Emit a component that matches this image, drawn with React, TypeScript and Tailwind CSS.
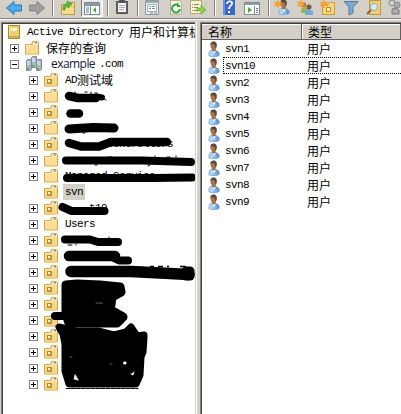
import React from 'react';

function Mixed({ text }: { text: string }) {
  const parts = text.match(/[\x00-\x7f]+|[^\x00-\x7f]+/g) || [];
  return (
    <span className="flex items-center whitespace-pre">
      {parts.map((p, i) =>
        p.charCodeAt(0) < 128 ? (
          <span key={i} className="pt-px text-[11px] leading-[15px] tracking-[-0.6px] font-['Liberation_Mono',monospace]">{p}</span>
        ) : (
          <span key={i} className="text-[12px] leading-4 font-['Noto_Sans_CJK_SC',sans-serif]">{p}</span>
        ),
      )}
    </span>
  );
}

function Folder({ unit }: { unit?: boolean }) {
  return (
    <svg className="h-4 w-[14px] shrink-0" viewBox="0 0 14 16">
      <path d="M.5 4.500h6l1-3h5l1 1v11.500H.5z" fill="#f3cf78" stroke="#d3a650" />
      <path d="M8 2.500h5v1H8z" fill="#fff" />
      <path d="M10 2h2v1.500h-2z" fill="#549ee0" />
      <path d="M1 6h7l1-1h4v8.500H1z" fill={unit ? '#f8d784' : '#fbdd93'} />
      <path d="M1 5.500h6l1-1h5" fill="none" stroke="#fff0bd" />
      {unit && (
        <>
          <path d="M3.500 7.500h4v4h-4z" fill="#c7a850" stroke="#a5873c" />
          <path d="M4 8h2v2H4z" fill="#fff0b2" />
        </>
      )}
    </svg>
  );
}

function Expander({ open }: { open?: boolean }) {
  return (
    <svg className="h-[9px] w-[9px] shrink-0" viewBox="0 0 9 9" shapeRendering="crispEdges">
      <path d="M.5.5h8v8h-8z" fill="#fff" stroke="#808080" />
      <path d="M2 4h5v1H2z" />
      {!open && <path d="M4 2h1v5H4z" />}
    </svg>
  );
}

function PersonShape() {
  return (
    <>
      <path d="M.5 15L.8 10.500 3.500 8.500h4L11 11l.7 3-2.700 2H3z" fill="#86b4e0" />
      <path d="M1.500 11l2-1.500L6 13l-1 2H2z" fill="#b5d5f3" />
      <path d="M8 9.500l3 1.800.5 2.700L9 15.500z" fill="#6397cd" />
      <path d="M4 6.500h3.500V10L6 11.500 4 9z" fill="#9c683f" />
      <path d="M5 10.500l1 3 1.500-3.500z" fill="#fff" />
      <path d="M2.500 3l1-2h3l1.800 2v3.500L6.500 9h-2l-2-3z" fill="#a87348" />
      <path d="M2.300 4L3 1.500 5 .5h2l1.700 2v3L7.500 8l-.5-4-3-1z" fill="#55483e" />
    </>
  );
}

function Person() {
  return (
    <svg className="h-4 w-3 shrink-0" viewBox="0 0 12 16">
      <PersonShape />
    </svg>
  );
}

function Servers() {
  return (
    <svg className="h-4 w-4 shrink-0" viewBox="0 0 16 16">
      {[[5, 0], [0, 3], [10, 3]].map(([x, y]) => (
        <g key={x} transform={`translate(${x} ${y})`}>
          <path d="M.5 1.500l1-1h4v10l-1 1h-4z" fill="#a9b6c1" stroke="#7d8c98" />
          <path d="M1 3h3M1 5h3" stroke="#edf3f6" />
          <path d="M1 9h2v2H1z" fill="#59b541" />
        </g>
      ))}
    </svg>
  );
}

const Star = () => <path d="M4 0l1 2.500L8 2 6 4l2 2-3-.5L4 8 3 5.500 0 6l2-2-2-2 3 .5z" fill="#f7a52b" stroke="#ef9325" strokeWidth=".4" />;

const art: Record<string, React.ReactNode> = {
  back: <path d="M.5 8L8 1.500v3.500h7.500v6H8v3.500z" fill="#4aabed" stroke="#2474bb" />,
  forward: <path d="M15.500 8L8 1.500v3.500H.5v6H8v3.500z" fill="#a0a0a0" stroke="#818181" />,
  up: (
    <>
      <path d="M1.500 4.500h5l1-2h7v12h-13z" fill="#f2ce73" stroke="#c39642" />
      <path d="M2 8h12v6H2z" fill="#f9dc92" />
      <path d="M3 10c0-4 1-6 4-6V1l5 3-4 4V6C6 6 5 7 5 10z" fill="#58bd32" stroke="#388c27" strokeWidth=".6" />
    </>
  ),
  tree: (
    <>
      <path d="M.5 2.500h15v12H.5z" fill="#fff" stroke="#7a8998" />
      <path d="M1 3h14v2H1z" fill="#8c9cad" />
      <path d="M6.500 5v9M1 5.500h14" stroke="#7b8c9b" />
      <path d="M2 8h3M2 10h3M2 12h3" stroke="#527b9c" />
      <path d="M12 7v6l-3-3z" fill="#42ae39" />
    </>
  ),
  clip: (
    <>
      <path d="M2.500 1.500h11v12h-11z" fill="#626262" stroke="#555" />
      <path d="M4 3h8v9H4z" fill="#f4f4f4" />
      <path d="M5 0h6v3H5z" fill="#555" />
      <path d="M5 5.500h6M5 7.500h6M5 9.500h5" stroke="#aaa" />
    </>
  ),
  props: (
    <>
      <path d="M1.500.5h13v14h-13z" fill="#edf0f2" stroke="#8b98a3" />
      <path d="M2 1h12v2H2z" fill="#9ba8b3" />
      <path d="M3.500 4.500h9v7h-9z" fill="#fff" stroke="#a3adb6" />
      <path d="M5 6.500h2M8 6.500h3M5 8.500h2M8 8.500h3M6 13h3M10 13h3" stroke="#6e91aa" />
    </>
  ),
  refresh: (
    <>
      <path d="M2.500.5h9l2 3v10.500h-11z" fill="#fffdf3" stroke="#b7aa89" />
      <path d="M10 5a4 4 0 1 0 2 4" fill="none" stroke="#37aa3d" strokeWidth="2" />
      <path d="M9 2v5h4z" fill="#37aa3d" />
    </>
  ),
  export: (
    <>
      <path d="M.5.500h11v13H.5z" fill="#fff5cc" stroke="#b7a56d" />
      <path d="M2 4.500h1M4 4.500h5M2 7.500h1M4 7.500h4M2 10.500h1M4 10.500h4" stroke="#7f8278" />
      <path d="M7 8h4V5l5 5-5 4v-3H7z" fill="#8bd043" stroke="#5da32f" strokeWidth=".6" />
    </>
  ),
  help: (
    <>
      <path d="M2 0h12v15H2z" fill="#3869c8" />
      <path d="M2 0h2v15H2z" fill="#6994db" />
      <path d="M6 4c0-4 6-3 5 0-.5 1.500-3 2-3 5" fill="none" stroke="#fff" strokeWidth="1.800" />
      <path d="M7 11h2v2H7z" fill="#fff" />
    </>
  ),
  pane: (
    <>
      <path d="M.5 2.500h15v12H.5z" fill="#fff" stroke="#7a8998" />
      <path d="M1 3h14v2H1z" fill="#8c9cad" />
      <path d="M10.500 6v8" stroke="#7b8c9b" />
      <path d="M12 8.500h2M12 10.500h2M12 12.500h2" stroke="#527b9c" />
      <path d="M4 7v6l4-3z" fill="#42ae39" />
    </>
  ),
  newuser: (
    <>
      <g transform="translate(4 -1)"><PersonShape /></g>
      <Star />
    </>
  ),
  newgroup: (
    <>
      <path d="M4 13V9l3-2 4 2v4z" fill="#96b94c" />
      <path d="M8 15v-4l3-2 5 2v4z" fill="#76a8d2" />
      <circle cx="7" cy="5" r="2.500" fill="#b47a51" />
      <circle cx="12" cy="7" r="2.500" fill="#795741" />
      <Star />
    </>
  ),
  newfolder: (
    <>
      <path d="M2.500 4.500h6l1-2h5v12h-12z" fill="#f7d57b" stroke="#c89b42" />
      <path d="M6.500 7.500h4v4h-4z" fill="#ffe9a6" stroke="#b18b38" />
      <Star />
    </>
  ),
  filter: <path d="M1 1.500h14L10 7v6l-4 2V7z" fill="#7ba9d5" stroke="#557a9b" />,
  find: (
    <>
      <path d="M3.500.5h11v14h-11z" fill="#f2ce72" stroke="#bb9645" />
      <circle cx="8" cy="7" r="3.500" fill="#d6eefa" stroke="#8aaabe" />
      <path d="M5 10l-4 4" stroke="#8a6240" strokeWidth="2" />
    </>
  ),
  link: (
    <>
      <circle cx="4" cy="3" r="3" fill="#d0d0d0" stroke="#888" />
      <circle cx="9" cy="5" r="3" fill="#aaa" stroke="#888" />
      <path d="M4 14V9l4-1 3 2v4z" fill="#aaa" stroke="#777" />
    </>
  ),
};

function Tool({ name, className }: { name: string; className: string }) {
  return (
    <svg className={`h-4 w-4 shrink-0 ${className}`} viewBox="0 0 16 16">
      {art[name]}
    </svg>
  );
}

const Divider = ({ className }: { className: string }) => (
  <span className={`h-4 w-[2px] shrink-0 border-l border-[#808080] bg-white ${className}`} />
);

function Toolbar() {
  return (
    <header className="flex h-[18px] shrink-0 items-start overflow-hidden pl-[6px]">
      <Tool name="back" className="" />
      <Tool name="forward" className="ml-[7px]" />
      <Divider className="ml-[7px]" />
      <Tool name="up" className="ml-[6px]" />
      <span className="ml-[5px] flex h-[17px] w-[22px] shrink-0 justify-center border border-t-0 border-l-[#808080] border-r-white border-b-white bg-[#edebe6]">
        <Tool name="tree" className="" />
      </span>
      <Divider className="ml-[4px]" />
      <Tool name="clip" className="ml-[5px]" />
      <Divider className="ml-[7px]" />
      <Tool name="props" className="ml-[5px]" />
      <Tool name="refresh" className="ml-[8px]" />
      <Tool name="export" className="ml-[6px]" />
      <Divider className="ml-[8px]" />
      <Tool name="help" className="ml-[5px]" />
      <Tool name="pane" className="ml-[7px]" />
      <Divider className="ml-[8px]" />
      <Tool name="newuser" className="ml-[4px]" />
      <Tool name="newgroup" className="ml-[7px]" />
      <Tool name="newfolder" className="ml-[7px]" />
      <Tool name="filter" className="ml-[7px]" />
      <Tool name="find" className="ml-[7px]" />
      <Tool name="link" className="ml-[6px]" />
    </header>
  );
}

const units: { label: string; ou?: boolean; selected?: boolean }[] = [
  { label: 'AD测试域', ou: true },
  { label: '' },
  { label: '', ou: true },
  { label: '' },
  { label: '       Controllers', ou: true },
  { label: '' },
  { label: 'Managed Service' },
  { label: 'svn', ou: true, selected: true },
  { label: '    t10', ou: true },
  { label: 'Users' },
  ...Array.from({ length: 10 }, () => ({ label: '', ou: true })),
];

function Redactions() {
  return (
    <svg className="absolute top-0 left-0 h-[390px] w-[192px]" viewBox="3 24 192 390" fill="none" stroke="#000" strokeLinecap="round" strokeLinejoin="round">
      <path d="M69 96l9 2h18" strokeWidth="8.500" />
      <path d="M97 96.500l5 1" strokeWidth="6" />
      <path d="M104 99l2 1M75 92v1m10-1h2m4 0v2m4-1h2" strokeWidth="1" />
      <path d="M70.500 113.500h8.500" strokeWidth="8.500" />
      <path d="M69 129l24-1.500 21 .5" strokeWidth="9" />
      <path d="M83 133h2" strokeWidth="1" />
      <path d="M69 143l12 3.500h18l12-4.500h56" strokeWidth="8.500" />
      <path d="M66 160.500h76l49 1.500" strokeWidth="8" />
      <path d="M95 165h2m53 0l-2 1m-40-9h4m43-1v1m12 0h3m6-1v1" strokeWidth="1" />
      <path d="M67 178h85l40-.5" strokeWidth="8" />
      <path d="M62.500 207l9 4h33" strokeWidth="8" />
      <path d="M65 239.500h25l8 2.500h20" strokeWidth="8" />
      <path d="M69 256h46" strokeWidth="10.500" />
      <path d="M114 258l5 2.500h9" strokeWidth="8" />
      <path d="M71 271.500h60l58 3" strokeWidth="11.500" />
      <path d="M186 271h4v5h-4z" fill="#000" strokeWidth="9" />
      <path d="M66 285l11-1 23 1 20 2 1 5-9 5-1 8-4 3 9 5 7 4-6 6H69l-3-9z" fill="#000" strokeWidth="9" />
      <path d="M55 316h20" strokeWidth="8" />
      <path d="M59 327l17 4h22l16 4 12-3 5-5 6 9 7-1v3l-1 14-2 5-1 18-4 9H69l-4-13V344l-2-10z" fill="#000" strokeWidth="7" />
      <path d="M75 375l-1 4 4 1zM124 362h2v2h-2zM131 374l2 1 1-3" fill="#fff" stroke="#fff" strokeWidth=".8" />
      <path d="M66 388.500h72" strokeWidth="1" strokeDasharray="4 1" />
      <path d="M96 303h6v1M70 357h2m38 7h2" stroke="#777" strokeWidth=".8" />
      <path d="M116 267.500h7m6 0h6m4 0h5m6-1h4m4 0h5m4 0h2m11 0h6" strokeWidth="1.500" strokeLinecap="butt" />
      <path d="M68 245h4m4-1v1m33-8v1" strokeWidth="1" />
    </svg>
  );
}

function Tree() {
  return (
    <nav className="relative w-[192px] shrink-0 overflow-hidden bg-white">
      <div className="flex h-4 items-center pl-[5px]">
        <svg className="h-[14px] w-3 shrink-0" viewBox="0 0 12 14">
          <path d="M.5.5h11v13H.5z" fill="#f0cd69" stroke="#a98532" />
          <path d="M3 3h6v3H3z" fill="#fff7d5" />
          <path d="M1 11h10v2H1z" fill="#cbae61" />
          <path d="M1.500 1v9" stroke="#fff0b0" />
        </svg>
        <span className="ml-[7px]"><Mixed text="Active Directory 用户和计算机" /></span>
      </div>
      <div className="flex h-4 items-center pl-[7px]">
        <Expander />
        <span className="ml-[6px] flex"><Folder /></span>
        <span className="ml-[7px]"><Mixed text="保存的查询" /></span>
      </div>
      <div className="flex h-4 items-center pl-[7px]">
        <Expander open />
        <span className="ml-[7px] flex"><Servers /></span>
        <span className="ml-[9px] w-[45px] text-[12px] leading-[14px] tracking-[-0.55px] text-[#10203c] font-['Open_Sans',sans-serif]">example</span>
        <span className="ml-[3px]"><Mixed text=".com" /></span>
      </div>
      {units.map((u, i) => (
        <div key={i} className="flex h-4 items-center pl-[26px]">
          <span className="flex w-[9px]">{!u.selected && <Expander />}</span>
          <span className="ml-[6px] flex"><Folder unit={u.ou} /></span>
          <span className={u.selected ? 'ml-[5px] bg-[#d4d0c8] px-[2px]' : 'ml-[7px]'}>
            <Mixed text={u.label} />
          </span>
        </div>
      ))}
      <Redactions />
    </nav>
  );
}

const users = ['svn1', 'svn10', 'svn2', 'svn3', 'svn4', 'svn5', 'svn6', 'svn7', 'svn8', 'svn9'];

function UserList() {
  return (
    <main className="min-w-0 flex-1 bg-white">
      <div className="flex h-4 border-b border-[#606060] bg-[#d4d0c8] shadow-[inset_0_1px_#fff]">
        <div className="flex w-[100px] items-center border-r border-[#606060] pl-[6px]"><Mixed text="名称" /></div>
        <div className="flex flex-1 items-center border-r border-l border-r-[#606060] border-l-white pl-[5px]"><Mixed text="类型" /></div>
      </div>
      {users.map((u, i) => (
        <div key={u} className="flex h-[17px] items-center pl-[6px]">
          <Person />
          <div className={`ml-[3px] flex h-[17px] flex-1 items-center border-y border-l border-dotted pl-px ${i === 1 ? 'border-black' : 'border-transparent'}`}>
            <span className="w-[82px]"><Mixed text={u} /></span>
            <Mixed text="用户" />
          </div>
        </div>
      ))}
    </main>
  );
}

export default function App() {
  return (
    <div className="flex h-[414px] w-[401px] flex-col overflow-hidden bg-[#d4d0c8] text-black">
      <Toolbar />
      <div className="h-1 shrink-0 border-t border-[#808080] shadow-[inset_0_1px_#fff]" />
      <div className="flex min-h-0 flex-1">
        <div className="ml-px flex border-t border-l border-[#808080]">
          <div className="flex border-t border-l border-[#404040]"><Tree /></div>
        </div>
        <div className="w-[5px] shrink-0 border-l border-[#d4d0c8] shadow-[inset_1px_0_#fff]" />
        <div className="flex min-w-0 flex-1 border-t border-l border-[#808080]">
          <div className="flex min-w-0 flex-1 border-t border-l border-[#404040]"><UserList /></div>
        </div>
      </div>
    </div>
  );
}
